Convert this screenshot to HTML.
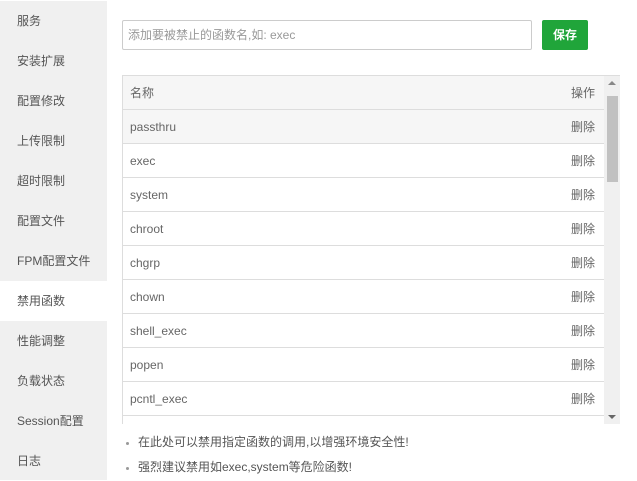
<!DOCTYPE html><html><head><meta charset="utf-8"><style>
body{margin:0;width:637px;height:479px;overflow:hidden;background:#fff;font-family:"Liberation Sans","Noto Sans CJK SC",sans-serif;font-size:12px;color:#555;position:relative}
.side{position:absolute;left:0;top:1px;width:107px;height:479px;background:#f0f0f0}
.side div{height:40px;line-height:40px;padding-left:17px;color:#555;font-size:12px}
.side .on{background:#fff}
.inp{position:absolute;left:122px;top:20px;border:1px solid #ccc;border-radius:2px;line-height:29px;padding-left:5px;box-sizing:border-box;width:410px;height:30px;color:#999}
.btn{position:absolute;left:542px;top:20px;width:46px;height:30px;background:#20a53a;color:#fff;border-radius:2px;text-align:center;line-height:31px;font-weight:bold}
.tbl{position:absolute;left:122px;top:75px;width:498px;height:349px;overflow:hidden;border-left:1px solid #ddd;border-top:1px solid #ddd;box-sizing:border-box}
.row{height:34px;line-height:35px;border-bottom:1px solid #ddd;box-sizing:border-box;width:482px;position:relative;padding-left:7px;color:#666;border-right:1px solid #ddd}
.row span{position:absolute;right:9px;top:0}
.hd{background:#f6f6f6}
.sb{position:absolute;right:0;top:0;width:16px;height:349px;background:#f0f0f0}
.th{position:absolute;left:3px;top:20px;width:11px;height:86px;background:#c1c1c1}
ul{position:absolute;left:108px;top:430px;margin:0;padding-left:30px;color:#555;font-size:12px}
li{line-height:25px}
li::marker{color:#999;font-size:10px}
</style></head><body>
<div class="side"><div>服务</div><div>安装扩展</div><div>配置修改</div><div>上传限制</div><div>超时限制</div><div>配置文件</div><div>FPM配置文件</div><div class="on">禁用函数</div><div>性能调整</div><div>负载状态</div><div>Session配置</div><div>日志</div></div>
<div class="inp">添加要被禁止的函数名,如: exec</div>
<div class="btn">保存</div>
<div class="tbl">
<div class="row hd">名称<span>操作</span></div>
<div class="row hd">passthru<span>删除</span></div>
<div class="row">exec<span>删除</span></div>
<div class="row">system<span>删除</span></div>
<div class="row">chroot<span>删除</span></div>
<div class="row">chgrp<span>删除</span></div>
<div class="row">chown<span>删除</span></div>
<div class="row">shell_exec<span>删除</span></div>
<div class="row">popen<span>删除</span></div>
<div class="row">pcntl_exec<span>删除</span></div>
<div class="row">ini_alter<span>删除</span></div>
<div class="sb"><div class="th"></div><div style="position:absolute;left:4px;top:5px;width:0;height:0;border:4px solid transparent;border-bottom-color:#888;border-top:0"></div><div style="position:absolute;left:4px;bottom:6px;width:0;height:0;border:4px solid transparent;border-top-color:#666;border-bottom:0"></div></div>
</div>
<ul><li>在此处可以禁用指定函数的调用,以增强环境安全性!</li><li>强烈建议禁用如exec,system等危险函数!</li></ul>
</body></html>
